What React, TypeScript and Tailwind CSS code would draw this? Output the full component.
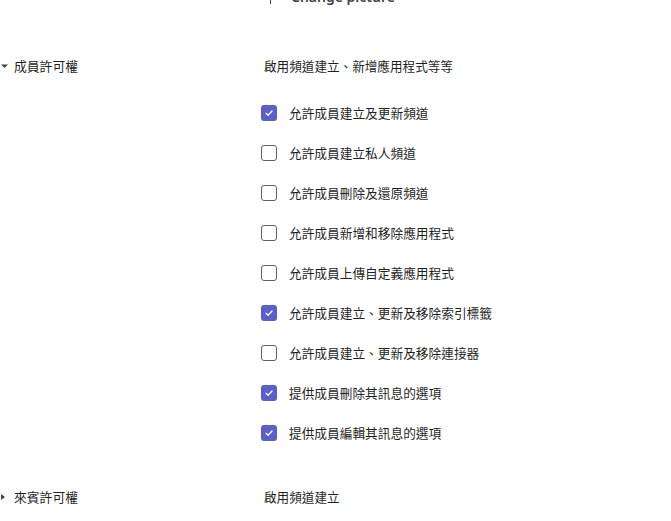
const font = { fontFamily: '"Noto Sans CJK TC", "Noto Sans", sans-serif' };

const options = [
  { label: '允許成員建立及更新頻道', checked: true },
  { label: '允許成員建立私人頻道', checked: false },
  { label: '允許成員刪除及還原頻道', checked: false },
  { label: '允許成員新增和移除應用程式', checked: false },
  { label: '允許成員上傳自定義應用程式', checked: false },
  { label: '允許成員建立、更新及移除索引標籤', checked: true },
  { label: '允許成員建立、更新及移除連接器', checked: false },
  { label: '提供成員刪除其訊息的選項', checked: true },
  { label: '提供成員編輯其訊息的選項', checked: true },
];

const Checkbox = ({ checked }: { checked: boolean }) =>
  checked ? (
    <div className="w-4 h-4 rounded-[3px] bg-[#5b5fc7] flex items-center justify-center">
      <svg width="10" height="10" viewBox="0 0 10 10" fill="none">
        <path d="M2 5.2 L4.1 7.2 L8 3" stroke="white" strokeWidth="1.3" strokeLinecap="round" strokeLinejoin="round" />
      </svg>
    </div>
  ) : (
    <div className="w-4 h-4 rounded-[3px] border border-[#616161] bg-white" />
  );

export default function App() {
  return (
    <div className="w-[671px] h-[521px] bg-white overflow-hidden text-[#1f1f1f]" style={font}>
      {/* cut off header row */}
      <div className="-mt-[14px] h-[20px] flex items-center">
        <div className="ml-[270px] w-px h-[16px] bg-[#424242]" />
        <span className="ml-[20px] text-[14px] font-semibold text-[#424242]" style={{ fontFamily: '"Noto Sans", sans-serif' }}>
          Change picture
        </span>
      </div>

      {/* member permissions */}
      <div className="mt-[40px] flex">
        <div className="w-[264px] h-[40px] flex items-center">
          <svg width="8" height="6" viewBox="0 0 8 6" className="ml-[1px]">
            <path d="M0 1.5 L7 1.5 L3.5 5 Z" fill="#424242" />
          </svg>
          <span className="ml-[5px] text-[12.8px]">成員許可權</span>
        </div>
        <div className="flex flex-col">
          <div className="h-[40px] flex items-center text-[12.6px]">啟用頻道建立、新增應用程式等等</div>
          <div className="mt-[7px] flex flex-col -ml-[3px]">
            {options.map((o) => (
              <div key={o.label} className="h-[40px] flex items-center gap-[12px]">
                <Checkbox checked={o.checked} />
                <span className="text-[12.7px]">{o.label}</span>
              </div>
            ))}
          </div>
        </div>
      </div>

      {/* guest permissions */}
      <div className="mt-[24px] flex">
        <div className="w-[264px] h-[40px] flex items-center">
          <svg width="8" height="8" viewBox="0 0 8 8" className="ml-0">
            <path d="M1 1 L5 4 L1 7 Z" fill="#424242" />
          </svg>
          <span className="ml-[6px] text-[12.8px]">來賓許可權</span>
        </div>
        <div className="h-[40px] flex items-center text-[12.6px]">啟用頻道建立</div>
      </div>
    </div>
  );
}
